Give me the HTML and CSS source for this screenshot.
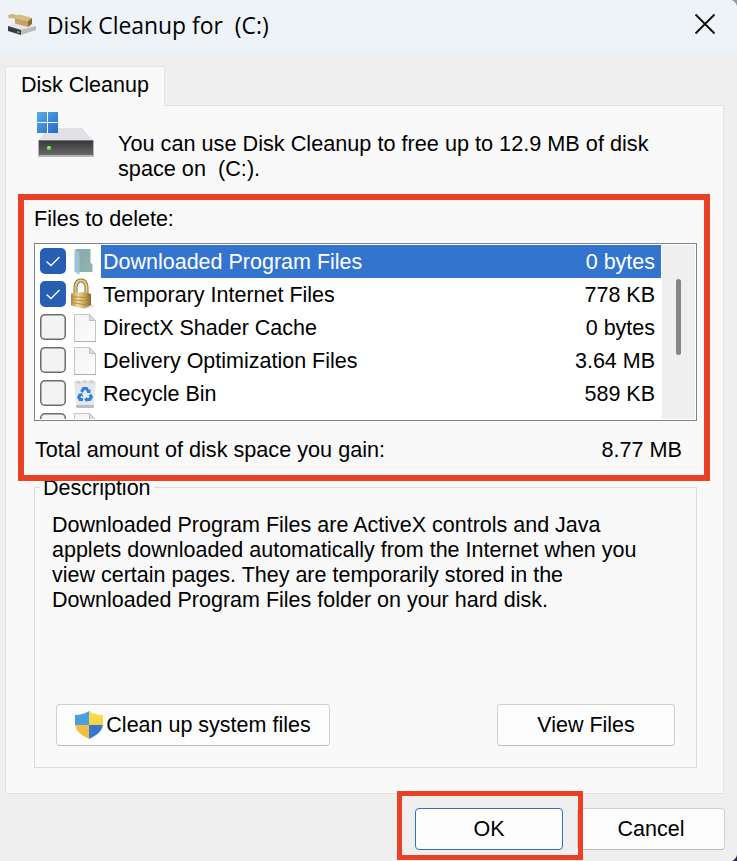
FILE: index.html
```html
<!DOCTYPE html>
<html lang="en">
<head>
<meta charset="UTF-8">
<meta name="viewport" content="width=device-width, initial-scale=1.0">
<title>Disk Cleanup</title>
<link rel="stylesheet" href="styles.css">
</head>
<body>
<!-- shared icons -->
<svg width="0" height="0" class="defs">
  <defs>
    <linearGradient id="paper" x1="0" y1="0" x2="1" y2="1"><stop offset="0" stop-color="#f4f4f4"/><stop offset="1" stop-color="#fcfcfc"/></linearGradient>
    <linearGradient id="blue" x1="0" y1="0" x2="1" y2="1"><stop offset="0" stop-color="#55ade8"/><stop offset="1" stop-color="#2a69c8"/></linearGradient>
    <linearGradient id="gold" x1="0" y1="0" x2="1" y2="0"><stop offset="0" stop-color="#b48a3c"/><stop offset=".35" stop-color="#f0dc98"/><stop offset=".7" stop-color="#c9a456"/><stop offset="1" stop-color="#876022"/></linearGradient>
    <linearGradient id="yellow" x1="0" y1="0" x2="0" y2="1"><stop offset="0" stop-color="#fce14c"/><stop offset="1" stop-color="#f6cf45"/></linearGradient>
    <linearGradient id="metal" x1="0" y1="0" x2="0" y2="1"><stop offset="0" stop-color="#383838"/><stop offset="1" stop-color="#686868"/></linearGradient>
    <linearGradient id="teal" x1="0" y1="0" x2="1" y2="1"><stop offset="0" stop-color="#87aaae"/><stop offset="1" stop-color="#8fb4b0"/></linearGradient>
    <symbol id="page" viewBox="0 0 24 30">
      <path d="M1.500 1.500h15l6 6v21h-21z" fill="url(#paper)" stroke="#c6c6c6"/>
      <path d="M1 28.500h22" stroke="#b0b0b0"/>
      <path d="M16.500 1.500v6h6z" fill="#dcdcdc" stroke="#bdbdbd"/>
    </symbol>
    <symbol id="tick" viewBox="0 0 26 26">
      <path d="M6.500 13.500l4.500 4 8.500-8.500" fill="none" stroke="#fff" stroke-width="1.300"/>
    </symbol>
  </defs>
</svg>

<div class="dialog">
  <div class="titlebar">
    <svg class="app-icon" width="30" height="24" viewBox="0 0 30 24">
      <path d="M0 14l8-4 20 5-15 5z" fill="#e6e6e9"/>
      <path d="M12 18l16-4v4l-15 5z" fill="#bcbcc0"/>
      <path d="M0 14l13 4v5l-13-4z" fill="#3a3d3f"/>
      <path d="M9 19l2.500 .7v1.500l-2.500-.7z" fill="#4fd04c"/>
      <path d="M0 3.500Q2 1.500 5 2L11 4l-3 3-3-1-4 .5z" fill="#cdb87a"/>
      <path d="M7 4l5-1.500 12 3.500-4 3-13-3z" fill="#d3be7e"/>
      <path d="M7 6l13 3v6l-13-3.500z" fill="#c3a562"/>
      <path d="M20 9l4-3v6l-4 3z" fill="#8b6e30"/>
    </svg>
    <span class="title">Disk Cleanup for&nbsp; (C:)</span>
    <svg class="close" width="22" height="22" viewBox="0 0 22 22"><path d="M1.500 1.500l19 19M20.500 1.500l-19 19" stroke="#111" stroke-width="1.900"/></svg>
  </div>

  <div class="tab">Disk Cleanup</div>
  <div class="panel">
    <div class="intro">
      <svg width="58" height="46" viewBox="0 0 58 46">
        <path d="M12 16h33l11 12.500h-55z" fill="#e1e2e7"/>
        <rect x="1" y="28" width="56" height="17" rx="1" fill="#b5b5b8"/>
        <rect x="2" y="28.500" width="54" height="14.500" fill="url(#metal)"/>
        <circle cx="12" cy="36" r="2.300" fill="#48d830"/>
        <circle cx="11.700" cy="35.500" r="1" fill="#b0ff8c"/>
        <path d="M0 0h21v21h-21z" fill="url(#blue)"/>
        <path d="M10.500 0v21M0 10.500h21" stroke="#f9f9f9"/>
      </svg>
      <p>You can use Disk Cleanup to free up to 12.9 MB of disk<br>space on&nbsp; (C:).</p>
    </div>

    <div class="files-label">Files to delete:</div>
    <div class="list">
      <div class="rows">
        <div class="row selected">
          <span class="check on"><svg width="26" height="26"><use href="#tick"/></svg></span>
          <svg class="file-icon" width="24" height="30" viewBox="0 0 24 30">
            <path d="M3 2h14.500v14l2 1v8h-16.500z" fill="url(#teal)"/>
            <path d="M1.500 2l5 4v22l-5-3.500z" fill="#9fc3d0"/>
          </svg>
          <span class="name">Downloaded Program Files</span><span class="size">0 bytes</span>
        </div>
        <div class="row">
          <span class="check on"><svg width="26" height="26"><use href="#tick"/></svg></span>
          <svg class="file-icon lock" width="24" height="32" viewBox="0 0 24 32">
            <ellipse cx="16" cy="28" rx="8" ry="2.500" fill="#e6e4df"/>
            <path d="M5.500 17v-8Q6 2.500 11 2.500T16.500 9v8" fill="none" stroke="#8f7438" stroke-width="4"/>
            <path d="M5.500 17v-8Q6 2.500 11 2.500T16.500 9v8" fill="none" stroke="#e1cd8f" stroke-width="2"/>
            <path d="M1 15.500l13-1.500 7 2v11l-7 3.500-13-3z" fill="url(#gold)"/>
            <path d="M1 18.500l13 1 7-1.500M1 21.500l13 1.500 7-2M1 24.500l13 2 7-2.500" fill="none" stroke="#a5823c" stroke-width=".8"/>
          </svg>
          <span class="name">Temporary Internet Files</span><span class="size">778 KB</span>
        </div>
        <div class="row">
          <span class="check"></span>
          <svg class="file-icon" width="24" height="30"><use href="#page"/></svg>
          <span class="name">DirectX Shader Cache</span><span class="size">0 bytes</span>
        </div>
        <div class="row">
          <span class="check"></span>
          <svg class="file-icon" width="24" height="30"><use href="#page"/></svg>
          <span class="name">Delivery Optimization Files</span><span class="size">3.64 MB</span>
        </div>
        <div class="row">
          <span class="check"></span>
          <svg class="file-icon" width="24" height="30" viewBox="0 0 24 30">
            <path d="M1 3l3-2 4 1.500 3-2 4 1.500 4-1.500 4 2.500-1 3h-20z" fill="#dedfe1"/>
            <path d="M4 3l3 1M11 2l2 2M17 2l3 2" stroke="#b8b8b8"/>
            <path d="M1 4.500h22l-2.500 24h-17z" fill="#e4e8ec"/>
            <path d="M3 26h18l-.5 3h-17z" fill="#b9bdc2"/>
            <g fill="none" stroke="#2f7fd6" stroke-width="3">
              <path d="M8.500 13l2-3.500h3l2 3"/>
              <path d="M17 15.500l1.300 2.500-1.500 2.500h-3"/>
              <path d="M10 20.500h-3l-1.300-2.500 1.500-2.500"/>
            </g>
            <path d="M17.500 10v4h-4zM14 18v5l-3-2.500zM5 15l4-1 1 4z" fill="#2f7fd6"/>
          </svg>
          <span class="name">Recycle Bin</span><span class="size">589 KB</span>
        </div>
        <div class="row">
          <span class="check"></span>
          <svg class="file-icon" width="24" height="30"><use href="#page"/></svg>
        </div>
      </div>
      <div class="scrollbar"><div class="thumb"></div></div>
    </div>
    <div class="total"><span>Total amount of disk space you gain:</span><span>8.77 MB</span></div>

    <div class="group">
      <div class="legend">Description</div>
      <p>Downloaded Program Files are ActiveX controls and Java<br>applets downloaded automatically from the Internet when you<br>view certain pages. They are temporarily stored in the<br>Downloaded Program Files folder on your hard disk.</p>
      <div class="group-buttons">
        <button class="btn clean">
          <svg width="28" height="28" viewBox="0 0 28 28">
            <path d="M14 0Q8 4 0 4v10h14z" fill="#4a9fe0"/>
            <path d="M14 0q6 4 14 4v10h-14z" fill="url(#yellow)"/>
            <path d="M0 14h14v14Q1 22 0 14z" fill="#f3bd41"/>
            <path d="M28 14h-14v14q13-6 14-14z" fill="#3477cc"/>
          </svg>Clean up system files</button>
        <button class="btn view">View Files</button>
      </div>
    </div>
    <div class="mark mark-files"></div>
  </div>

  <div class="footer">
    <button class="btn ok">OK</button>
    <button class="btn cancel">Cancel</button>
    <div class="mark mark-ok"></div>
  </div>

  <svg class="corner top" width="5" height="6"><path d="M0 0h5v6Q4 2 0 0z" fill="#8b99a8"/></svg>
  <svg class="corner bottom" width="5" height="6"><path d="M5 0v6h-5Q4 4 5 0z" fill="#1c2462"/></svg>
</div>
</body>
</html>
```
FILE: styles.css
```css
* {
  box-sizing: border-box;
}

body {
  margin: 0;
  font-family: "Liberation Sans", Arial, sans-serif;
  font-size: 21.5px;
  line-height: 25px;
  color: #000;
}

p {
  margin: 0;
}

svg {
  display: block;
  flex-shrink: 0;
}

.defs {
  position: absolute;
}

.dialog {
  position: relative;
  width: 737px;
  height: 861px;
  background-color: #efefef;
  overflow: hidden;
  white-space: nowrap;
}

.titlebar {
  display: flex;
  align-items: center;
  height: 53px;
  padding: 0 21px 5px 8px;
  background-color: #eef3f8;
}

.title {
  flex: 1;
  margin-left: 9px;
  padding-top: 3px;
  font-family: "Open Sans", "Noto Sans", sans-serif;
  font-size: 22.9px;
}

.tab {
  position: relative;
  z-index: 1;
  width: 160px;
  height: 40px;
  margin: 13px 0 0 5px;
  padding: 6px 0 0 15px;
  background-color: #f9f9f9;
  border: 1px solid #e4e4e4;
  border-bottom: none;
}

.panel {
  position: relative;
  width: 719px;
  height: 689px;
  margin: -1px 0 0 5px;
  padding: 6px 27px 0 28px;
  background-color: #f9f9f9;
  border: 1px solid #e2e2e2;
}

.intro {
  display: flex;
  height: 95px;
  padding-left: 3px;
  font-size: 21.68px;
}

.intro p {
  margin: 19px 0 0 23px;
}

.files-label {
  height: 36px;
}

.list {
  display: flex;
  width: 663px;
  height: 178px;
  padding: 1px;
  background-color: #fff;
  border: 1px solid #80838b;
}

.rows {
  width: 626px;
  margin-right: 1px;
  overflow: hidden;
}

.row {
  display: flex;
  align-items: center;
  height: 33px;
  padding-left: 4px;
  line-height: 33px;
}

.check {
  flex-shrink: 0;
  width: 26px;
  height: 26px;
  margin-bottom: 1px;
  background-color: #f3f3f3;
  border-radius: 5px;
  box-shadow: inset 0 0 0 1.5px #6c6c6c;
}

.check.on {
  background-color: #285fb4;
  box-shadow: none;
}

.file-icon {
  margin: 1px 4px 0 7px;
}

.file-icon.lock {
  margin: -2px 7px 0 4px;
}

.name,
.size {
  height: 33px;
  padding-top: 1px;
}

.name {
  flex: 1;
  padding-left: 2px;
}

.size {
  padding-right: 6px;
}

.selected .name,
.selected .size {
  color: #fff;
  background-color: #3374cf;
}

.scrollbar {
  width: 33px;
  padding: 34px 0 0 14px;
  background-color: #efefef;
}

.thumb {
  width: 5px;
  height: 76px;
  background-color: #858585;
  border-radius: 3px;
}

.total {
  display: flex;
  justify-content: space-between;
  height: 66px;
  padding: 16px 14px 0 1px;
  font-size: 21.65px;
}

.group {
  width: 663px;
  height: 281px;
  padding: 0 21px 0 17px;
  border: 1px solid #dcdcdc;
}

.legend {
  width: 114px;
  height: 25px;
  margin: -12px 0 12px -12px;
  padding-left: 3px;
  background-color: #f9f9f9;
}

.group-buttons {
  display: flex;
  justify-content: space-between;
  margin: 91px 0 0 4px;
}

.btn {
  display: flex;
  align-items: center;
  justify-content: center;
  height: 42px;
  padding: 1px 0 0;
  font: inherit;
  color: #000;
  background-color: #fdfdfd;
  border: 1px solid #d0d0d0;
  border-bottom-color: #bcbcbc;
  border-radius: 4px;
}

.clean {
  width: 274px;
  gap: 3px;
}

.clean svg {
  margin-top: -1px;
}

.view {
  width: 178px;
}

.footer {
  position: relative;
  display: flex;
  justify-content: flex-end;
  gap: 14px;
  padding: 14px 12px 0 0;
}

.ok,
.cancel {
  width: 148px;
}

.ok {
  border-color: #2d72c4;
}

/* red highlight frames */
.mark {
  position: absolute;
  border: 6px solid #ea4025;
  pointer-events: none;
}

.mark-files {
  left: 12px;
  top: 88px;
  width: 692px;
  height: 287px;
}

.mark-ok {
  left: 397px;
  top: -3px;
  width: 186px;
  height: 69px;
  border-width: 5px;
}

.corner {
  position: absolute;
  right: 0;
}

.corner.top {
  top: 0;
}

.corner.bottom {
  bottom: 0;
}
```
